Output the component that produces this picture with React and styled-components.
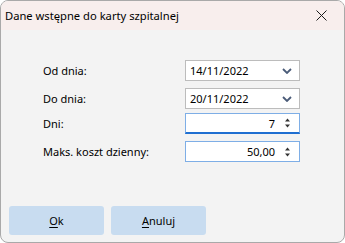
import React from 'react';
import styled, { createGlobalStyle } from 'styled-components';

const GlobalStyle = createGlobalStyle`
	html, body {
		margin: 0;
		padding: 0;
		background: #fff;
	}
	body {
		font-family: 'Noto Sans', 'Open Sans', sans-serif;
		font-size: 11px;
		color: #000;
	}
`;

const fields = [
	{ label: 'Od dnia:', value: '14/11/2022', kind: 'combo' },
	{ label: 'Do dnia:', value: '20/11/2022', kind: 'combo' },
	{ label: 'Dni:', value: '7', kind: 'spin', focused: true },
	{ label: 'Maks. koszt dzienny:', value: '50,00', kind: 'spin' },
];

function Chevron() {
	return (
		<svg width="10" height="6" viewBox="0 0 10 6">
			<path d="M1 1 L5 5 L9 1" fill="none" stroke="#4a5b78" strokeWidth="1.8" />
		</svg>
	);
}

function Spinner() {
	return (
		<svg width="7" height="12" viewBox="0 0 7 12">
			<path d="M3.5 1.5 L6 4.5 L1 4.5 Z" fill="#333" />
			<path d="M1 7.5 L6 7.5 L3.5 10.5 Z" fill="#333" />
		</svg>
	);
}

export default function App() {
	return (
		<>
			<GlobalStyle />
			<Window>
				<TitleBar>
					<Title>Dane wstępne do karty szpitalnej</Title>
					<CloseBtn>
						<svg width="11" height="11" viewBox="0 0 11 11">
							<path d="M0.5 0.5 L10.5 10.5 M10.5 0.5 L0.5 10.5" stroke="#1a1a1a" strokeWidth="1" />
						</svg>
					</CloseBtn>
				</TitleBar>
				<Body>
					<Form>
						{fields.map((f) => (
							<Row key={f.label} $gap={f.label === 'Dni:' ? 3 : 0}>
								<Label>{f.label}</Label>
								{f.kind === 'combo' ? (
									<Combo>
										<span>{f.value}</span>
										<Chevron />
									</Combo>
								) : (
									<Spin $focused={f.focused}>
										<SpinValue>{f.value}</SpinValue>
										<Spinner />
									</Spin>
								)}
							</Row>
						))}
					</Form>
					<Footer>
						<Button>
							<u>O</u>k
						</Button>
						<Button>
							<u>A</u>nuluj
						</Button>
					</Footer>
				</Body>
			</Window>
		</>
	);
}

const Window = styled.div`
	box-sizing: border-box;
	width: 345px;
	height: 243px;
	border: 1px solid #a9a9a9;
	border-radius: 8px;
	overflow: hidden;
	display: flex;
	flex-direction: column;
	background: #f3f3f3;
`;

const TitleBar = styled.div`
	height: 29px;
	display: flex;
	align-items: center;
	justify-content: space-between;
	background: #f8eeed;
	padding: 0 0 0 4px;
`;

const Title = styled.span`
	font-size: 11.2px;
`;

const CloseBtn = styled.div`
	width: 46px;
	height: 29px;
	display: flex;
	align-items: center;
	justify-content: center;
`;

const Body = styled.div`
	flex: 1;
	display: flex;
	flex-direction: column;
	justify-content: space-between;
`;

const Form = styled.div`
	padding: 30px 0 0 42px;
	display: flex;
	flex-direction: column;
	gap: 7px;
`;

const Row = styled.div`
	display: flex;
	align-items: center;
	margin-top: ${(p) => -p.$gap}px;
`;

const Label = styled.span`
	width: 142px;
`;

const FieldBox = styled.div`
	box-sizing: border-box;
	width: 115px;
	height: 21px;
	background: #fff;
	display: flex;
	align-items: center;
`;

const Combo = styled(FieldBox)`
	border: 1px solid #bcbcbc;
	justify-content: space-between;
	padding: 0 7px 0 4px;
`;

const Spin = styled(FieldBox)`
	border: 1px solid #7eaee6;
	border-bottom: ${(p) => (p.$focused ? '2px solid #1f6fd1' : '1px solid #7eaee6')};
	padding: 0 8px 0 4px;
	gap: 9px;
`;

const SpinValue = styled.span`
	flex: 1;
	text-align: right;
`;

const Footer = styled.div`
	display: flex;
	gap: 7px;
	padding: 0 0 7px 8px;
`;

const Button = styled.div`
	width: 95px;
	height: 29px;
	border-radius: 3px;
	background: #c8dcf0;
	display: flex;
	align-items: center;
	justify-content: center;

	u {
		text-underline-offset: 2px;
	}
`;
